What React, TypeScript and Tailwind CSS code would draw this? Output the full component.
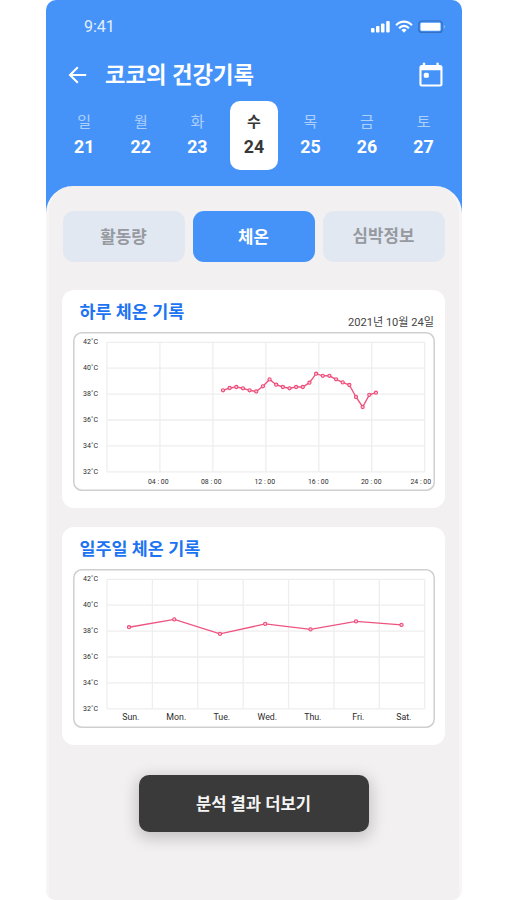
import React from "react";

const days = [
  { name: "일", date: 21 },
  { name: "월", date: 22 },
  { name: "화", date: 23 },
  { name: "수", date: 24 },
  { name: "목", date: 25 },
  { name: "금", date: 26 },
  { name: "토", date: 27 },
];

const temps = ["42", "40", "38", "36", "34", "32"];

type Point = [number, number];
type Label = { x: number; text: string };

const dayPoints: Point[] = [
  390.3, 388, 387, 388.3, 390.3, 391.5, 386.3, 379.4, 384.7, 387, 388.3, 387,
  387, 382.7, 373.7, 375.8, 375.8, 379.3, 382.4, 385, 397, 407, 394.8, 392.7,
].map((y, i) => [150 + i * 6.65, y - 332]);

const weekPoints: Point[] = [
  [56, 58.2],
  [101.3, 50.4],
  [147, 64.9],
  [192.2, 54.9],
  [237.5, 60.4],
  [283, 52.4],
  [328.5, 55.9],
];

const hours: Label[] = [
  { x: 85, text: "04 : 00" },
  { x: 138, text: "08 : 00" },
  { x: 191.5, text: "12 : 00" },
  { x: 245, text: "16 : 00" },
  { x: 298, text: "20 : 00" },
  { x: 347.5, text: "24 : 00" },
];

const weekdays: Label[] = ["Sun.", "Mon.", "Tue.", "Wed.", "Thu.", "Fri.", "Sat."].map(
  (text, i) => ({ x: 57.5 + i * 45.5, text })
);

interface ChartProps {
  columns: number;
  points: Point[];
  labels: Label[];
  labelSize: number;
  labelY: number;
}

function Chart({ columns, points, labels, labelSize, labelY }: ChartProps) {
  const left = 34;
  const right = 351.7;
  const top = 10.3;
  const bottom = 139.8;
  const step = (bottom - top) / 5;
  const col = (right - left) / columns;
  return (
    <svg width="362" height="159" viewBox="0 0 362 159" className="block font-[Roboto,sans-serif]">
      <rect x="0.8" y="0.8" width="360.4" height="157.4" rx="8" fill="#fff" stroke="#cfcfcf" strokeWidth="1.5" />
      <g stroke="#eeeeee" strokeWidth="1.3">
        {temps.map((t, i) => (
          <line key={t} x1={left} x2={right} y1={top + i * step} y2={top + i * step} />
        ))}
        {Array.from({ length: columns + 1 }, (_, i) => (
          <line key={i} y1={top} y2={bottom} x1={left + i * col} x2={left + i * col} />
        ))}
      </g>
      {temps.map((t, i) => (
        <text key={t} x="10" y={12.2 + i * step} fontSize="7" fill="#2c2c2c" textLength="15">
          {t}˚C
        </text>
      ))}
      {labels.map((l) => (
        <text key={l.text} x={l.x + 0.3} y={labelY} fontSize={labelSize} fill="#2c2c2c" textAnchor="middle">
          {l.text}
        </text>
      ))}
      <polyline points={points.map((p) => p.join(",")).join(" ")} fill="none" stroke="#ee5480" strokeWidth="1.4" />
      {points.map(([x, y]) => (
        <circle key={x} cx={x} cy={y} r="1.6" fill="#fbc8d6" stroke="#ee4a78" strokeWidth="1.1" />
      ))}
    </svg>
  );
}

function Card({ title, date, children }: { title: string; date?: string; children: React.ReactNode }) {
  return (
    <section className="h-[218px] w-[383px] rounded-xl bg-white pl-[10.5px]">
      <div className="flex h-[42px] justify-between pr-[11px] pl-[7px]">
        <h2 className="mt-[10px] text-[17.4px] leading-6 font-bold text-[#1d74f2]">{title}</h2>
        {date && <span className="mt-[25px] text-[11.1px] leading-4 text-[#444]">{date}</span>}
      </div>
      {children}
    </section>
  );
}

export default function App() {
  return (
    <div className="h-[900px] w-[507px] bg-white pl-[46px] font-[Roboto,'Noto_Sans_CJK_KR',sans-serif]">
      <main className="flex h-[900px] w-[416px] flex-col overflow-hidden rounded-[10px] bg-linear-to-b from-[#4593f8] from-50% to-[#f2f0f1] to-50%">
        <header className="h-[186px] shrink-0 text-white">
          <div className="flex h-[53px] items-center justify-between pr-[16px] pl-[38px]">
            <span className="text-[16px] text-[#e2eefe]">9:41</span>
            <svg width="76" height="16" viewBox="0 0 76 16" fill="#fff">
              <rect x="1" y="9" width="3.5" height="4.5" rx="1" />
              <rect x="6" y="7" width="3.5" height="6.5" rx="1" />
              <rect x="11" y="4.6" width="3.5" height="8.9" rx="1" />
              <rect x="16.2" y="2" width="3.5" height="11.5" rx="1" />
              <g fill="none" stroke="#fff" strokeWidth="2.1">
                <path d="M26.1 6.2C30.4 1.4 37.6 1.4 41.9 6.2" />
                <path d="M29.1 9.2C31.9 6.1 36.1 6.1 38.9 9.2" />
              </g>
              <path d="M31.4 10.9C33 9.4 35 9.4 36.6 10.9L34 13.7Z" />
              <rect x="48.8" y="2" width="23.4" height="11.4" rx="3" fill="#4593f8" stroke="#346fc0" strokeWidth="1.2" />
              <rect x="50.5" y="3.7" width="20" height="8" rx="1.2" />
              <path d="M73.8 6V9.6Q75 9 75 7.8Q75 6.5 73.8 6Z" fill="#8fbdfa" />
            </svg>
          </div>
          <div className="flex h-[44px] items-center pr-[18px] pl-[22px]">
            <svg width="19" height="18" viewBox="0 0 19 18" fill="none" stroke="#fff" strokeWidth="2.1">
              <path d="M18.2 9H2.2M9.8 1.2L2 9L9.8 16.8" />
            </svg>
            <h1 className="ml-[18px] text-[22.3px] leading-8 font-bold">코코의 건강기록</h1>
            <svg width="26" height="26" viewBox="0 0 26 26" fill="#fff" className="ml-auto">
              <path
                fillRule="evenodd"
                d="M4.8 0.8H7.2V3H18.4V0.8H20.8V3H22A2.5 2.5 0 0 1 24.5 5.5V22A2.5 2.5 0 0 1 22 24.5H3.9A2.5 2.5 0 0 1 1.4 22V5.5A2.5 2.5 0 0 1 3.9 3H4.8ZM3.5 8.3V22.4H22.4V8.3Z"
              />
              <rect x="5.8" y="10.8" width="5" height="5" rx="1.5" />
            </svg>
          </div>
          <nav className="mt-1 flex pl-[10px]">
            {days.map(({ name, date }) => (
              <div key={date} className="flex w-[56.55px] justify-center">
                <div
                  className={
                    date === 24
                      ? "h-[69px] w-[48px] rounded-[10px] bg-white pt-[10px] text-center text-[#383838]"
                      : "h-[69px] w-[48px] pt-[10px] text-center"
                  }
                >
                  <div
                    className={
                      date === 24
                        ? "text-[15px] leading-[22px] font-bold"
                        : "text-[15px] leading-[22px] text-[#aed0fd]"
                    }
                  >
                    {name}
                  </div>
                  <div className="mt-[3px] text-[17.8px] leading-[22px] font-bold">{date}</div>
                </div>
              </div>
            ))}
          </nav>
        </header>

        <div className="flex h-[714px] flex-col items-center rounded-t-[27px] border-x-[3px] border-[#f7f5f6] bg-[#f2f0f1] pt-[25px] pr-[1px]">
          <div className="flex gap-2 text-[16.8px] font-bold">
            <button className="h-[51px] w-[122px] rounded-[11px] bg-[#e1e8f1] pt-[2px] text-[#96999f]">활동량</button>
            <button className="h-[51px] w-[122px] rounded-[11px] bg-[#4593f8] pt-[2px] text-white">체온</button>
            <button className="h-[51px] w-[122px] rounded-[11px] bg-[#e1e8f1] text-[#96999f]">심박정보</button>
          </div>
          <div className="mt-[28px] flex flex-col gap-[19px]">
            <Card title="하루 체온 기록" date="2021년 10월 24일">
              <Chart columns={6} points={dayPoints} labels={hours} labelSize={6.9} labelY={151.6} />
            </Card>
            <Card title="일주일 체온 기록">
              <Chart columns={7} points={weekPoints} labels={weekdays} labelSize={8.8} labelY={151.3} />
            </Card>
          </div>
          <button className="mt-[30px] h-[57px] w-[230px] shrink-0 rounded-[10px] bg-[#3a3a3a] pt-[3px] text-[16.6px] font-bold text-[#f5f5f5] shadow-[0_4px_16px_2px_rgba(0,0,0,0.2)]">
            분석 결과 더보기
          </button>
        </div>
      </main>
    </div>
  );
}
